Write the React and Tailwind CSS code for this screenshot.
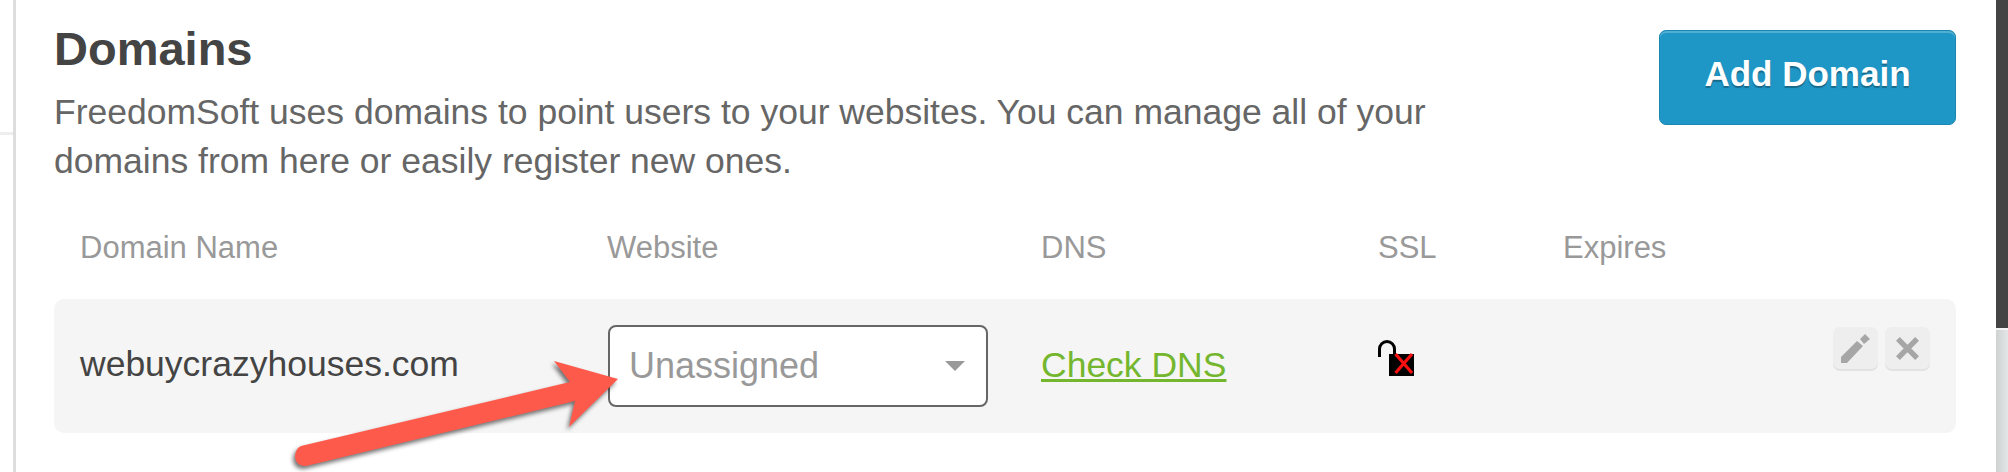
const SANS = "font-['Liberation_Sans',Arial,sans-serif]";
const COLS = "grid grid-cols-[527px_434px_337px_185px_1fr] pl-[26px]";

function LockIcon() {
  return (
    <svg width="40" height="40" viewBox="0 0 40 40" className="block">
      <path d="M3.5 19 V11 A7.5 7.5 0 0 1 18.5 11 V17" fill="none" stroke="#000" strokeWidth="3" />
      <rect x="13" y="16" width="25" height="22" fill="#000" />
      <path d="M19.5 16 L36 35 M36 16 L19.5 35" stroke="#f81010" strokeWidth="3.2" fill="none" />
    </svg>
  );
}

function Arrow() {
  return (
    <svg
      width="340"
      height="120"
      viewBox="0 0 340 120"
      className="absolute left-[290px] top-[355px] [filter:drop-shadow(-2px_3px_2px_rgba(0,0,0,0.55))]"
    >
      <path d="M11 91 L280 27 L264 6 L328 24 L279 72 L285 46 L16 111 Q6 111 5 102 Q5 94 11 91 Z" fill="#fe5a4c" />
    </svg>
  );
}

export default function App() {
  return (
    <div className={`relative flex w-[2008px] h-[472px] overflow-hidden bg-white ${SANS}`}>
      {/* left rail */}
      <div className="w-[16px] shrink-0 border-r-[3px] border-[#dddddd] pt-[132px]">
        <div className="h-[3px] bg-[#eeeeee]" />
      </div>

      {/* main panel */}
      <div className="w-[1980px] shrink-0 pl-[38px] pr-[40px] pt-[25px]">
        <div className="flex justify-between items-start">
          <div>
            <h2 className="text-[47px] leading-[48px] font-bold text-[#444444]">Domains</h2>
            <p className="mt-[15px] w-[1420px] text-[35.5px] leading-[49px] text-[#666666]">
              FreedomSoft uses domains to point users to your websites. You can manage all of your domains from here or easily register new ones.
            </p>
          </div>
          <button className="w-[297px] h-[95px] mt-[5px] pb-[6px] rounded-[7px] bg-[#1f97c6] border border-[#1a86b2] shadow-[inset_0_2px_0_#52aed3] text-white text-[35px] font-bold [text-shadow:0_2px_1px_rgba(0,0,0,0.3)]">
            Add Domain
          </button>
        </div>

        <div className={`${COLS} mt-[44px] text-[31px] leading-[36px] text-[#999999]`}>
          <div>Domain Name</div>
          <div>Website</div>
          <div>DNS</div>
          <div>SSL</div>
          <div>Expires</div>
        </div>

        <div className={`${COLS} mt-[33px] h-[134px] rounded-[10px] bg-[#f5f5f5] items-center`}>
          <div className="text-[35.5px] text-[#444444] pb-[2px]">webuycrazyhouses.com</div>
          <div className="w-[380px] h-[82px] ml-[1px] flex items-center justify-between pl-[19px] pr-[21px] bg-white border-2 border-[#666666] rounded-[8px]">
            <span className="text-[36px] text-[#999999]">Unassigned</span>
            <span className="w-0 h-0 border-x-[10px] border-x-transparent border-t-[10px] border-t-[#999999]" />
          </div>
          <a className="text-[35.5px] text-[#74b72e] underline">Check DNS</a>
          <div className="self-start mt-[39px] -ml-[2px]"><LockIcon /></div>
          <div className="flex justify-end gap-[7px] pr-[26px] self-start pt-[28px]">
            <button className="w-[45px] h-[42px] flex items-center justify-center rounded-[7px] bg-[#eeeeee] shadow-[0_2px_0_#e2e2e2]">
              <svg width="29" height="29" viewBox="0 0 29 29">
                <path d="M0 29 V23 L16 7 L22 12 L6 29 Z M19 5 L24 0 L29 5 L23 10 Z" fill="#a6a6a6" />
              </svg>
            </button>
            <button className="w-[45px] h-[42px] flex items-center justify-center rounded-[7px] bg-[#eeeeee] shadow-[0_2px_0_#e2e2e2]">
              <svg width="23" height="23" viewBox="0 0 24 24">
                <path d="M4 0 L12 8 L20 0 L24 4 L16 12 L24 20 L20 24 L12 16 L4 24 L0 20 L8 12 L0 4 Z" fill="#a6a6a6" />
              </svg>
            </button>
          </div>
        </div>
      </div>

      {/* right strip */}
      <div className="flex-1 flex flex-col">
        <div className="h-[328px] bg-[#444444]" />
        <div className="flex-1 border-t-2 border-[#f4f4f4] bg-linear-to-r from-[#d0d2d2] to-[#e3e6e6]" />
      </div>

      <Arrow />
    </div>
  );
}
